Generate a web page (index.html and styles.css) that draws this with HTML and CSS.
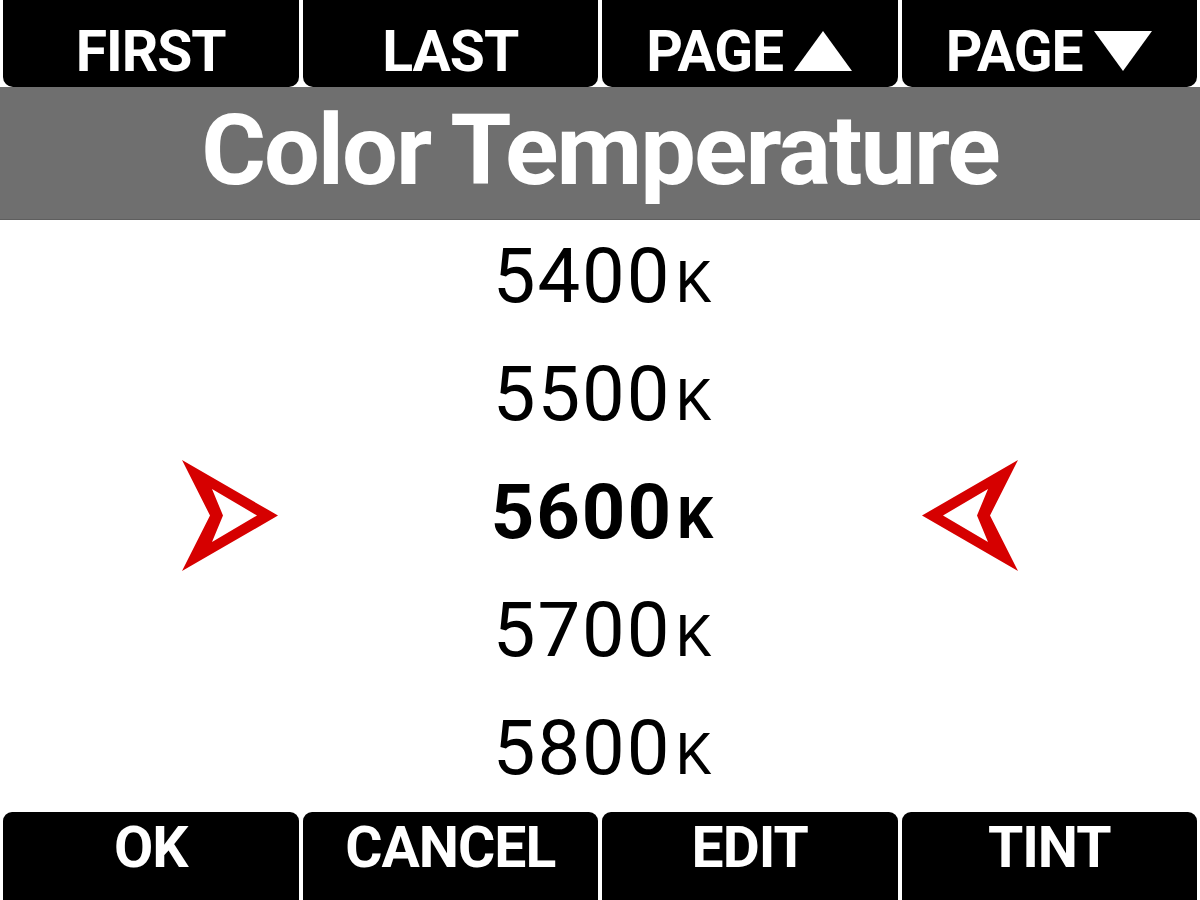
FILE: index.html
```html
<!DOCTYPE html>
<html>
<head>
<meta charset="utf-8">
<link rel="stylesheet" href="styles.css">
</head>
<body>
<div class="screen">
  <div class="topbar">
    <div class="tab top"><span>FIRST</span></div>
    <div class="tab top"><span>LAST</span></div>
    <div class="tab top"><span>PAGE</span><svg class="tri" viewBox="0 0 58 40"><path d="M29 0 L58 40 L0 40 Z"/></svg></div>
    <div class="tab top"><span>PAGE</span><svg class="tri" viewBox="0 0 58 40"><path d="M0 0 L58 0 L29 40 Z"/></svg></div>
  </div>
  <div class="title">Color Temperature</div>
  <div class="list">
    <div class="row"><span class="val">5400<span class="unit">K</span></span></div>
    <div class="row"><span class="val">5500<span class="unit">K</span></span></div>
    <div class="row selected">
      <svg class="arrow" viewBox="0 0 100 117"><path fill-rule="evenodd" d="M2 3 L98 58.5 L2 114 L30 58.5 Z M32 32 L43 58.5 L32 85 L77 58.5 Z"/></svg>
      <span class="val">5600<span class="unit">K</span></span>
      <svg class="arrow flip" viewBox="0 0 100 117"><path fill-rule="evenodd" d="M2 3 L98 58.5 L2 114 L30 58.5 Z M32 32 L43 58.5 L32 85 L77 58.5 Z"/></svg>
    </div>
    <div class="row"><span class="val">5700<span class="unit">K</span></span></div>
    <div class="row"><span class="val">5800<span class="unit">K</span></span></div>
  </div>
  <div class="bottombar">
    <div class="tab bottom"><span>OK</span></div>
    <div class="tab bottom"><span>CANCEL</span></div>
    <div class="tab bottom"><span>EDIT</span></div>
    <div class="tab bottom"><span>TINT</span></div>
  </div>
</div>
</body>
</html>
```
FILE: styles.css
```css
html, body {
  margin: 0;
  padding: 0;
  background: #ffffff;
}
.screen {
  width: 1200px;
  height: 900px;
  display: flex;
  flex-direction: column;
  font-family: Roboto, "Liberation Sans", sans-serif;
  overflow: hidden;
}
.topbar, .bottombar {
  display: flex;
  gap: 4px;
  padding: 0 3px;
  background: #ffffff;
}
.topbar {
  height: 87px;
}
.bottombar {
  height: 88px;
  margin-top: auto;
}
.tab {
  flex: 1;
  background: #000000;
  color: #ffffff;
  display: flex;
  justify-content: center;
  align-items: center;
  gap: 10px;
  font-weight: 700;
  font-size: 57px;
  line-height: 1;
}
.tab.top {
  border-radius: 0 0 10px 10px;
  padding-top: 16px;
}
.tab.bottom {
  border-radius: 9px 9px 0 0;
  padding-bottom: 18px;
}
.tab span {
  letter-spacing: -1px;
}
.tri {
  width: 60px;
  height: 40px;
  fill: #ffffff;
  margin-top: -2px;
}
.title {
  height: 133px;
  background: #6f6f6f;
  border-bottom: 1px solid #5e5e5e;
  box-sizing: border-box;
  color: #ffffff;
  font-weight: 700;
  font-size: 99px;
  line-height: 127px;
  text-align: center;
  letter-spacing: -2px;
}
.list {
  display: flex;
  flex-direction: column;
}
.row {
  height: 118px;
  line-height: 118px;
  display: grid;
  grid-template-columns: 180px 100px 1fr 100px 180px;
  align-items: center;
  font-size: 76px;
  color: #000000;
}
.row:first-child {
  margin-top: -3px;
}
.val {
  grid-column: 3;
  text-align: center;
  padding-left: 4px;
  letter-spacing: 2px;
}
.unit {
  font-size: 57px;
  margin-left: 4px;
  letter-spacing: 0;
}
.selected .val {
  font-weight: 700;
}
.arrow {
  width: 100px;
  height: 117px;
  fill: #d60000;
}
.arrow:first-child {
  grid-column: 2;
}
.arrow.flip {
  grid-column: 4;
  transform: scaleX(-1);
}
```
